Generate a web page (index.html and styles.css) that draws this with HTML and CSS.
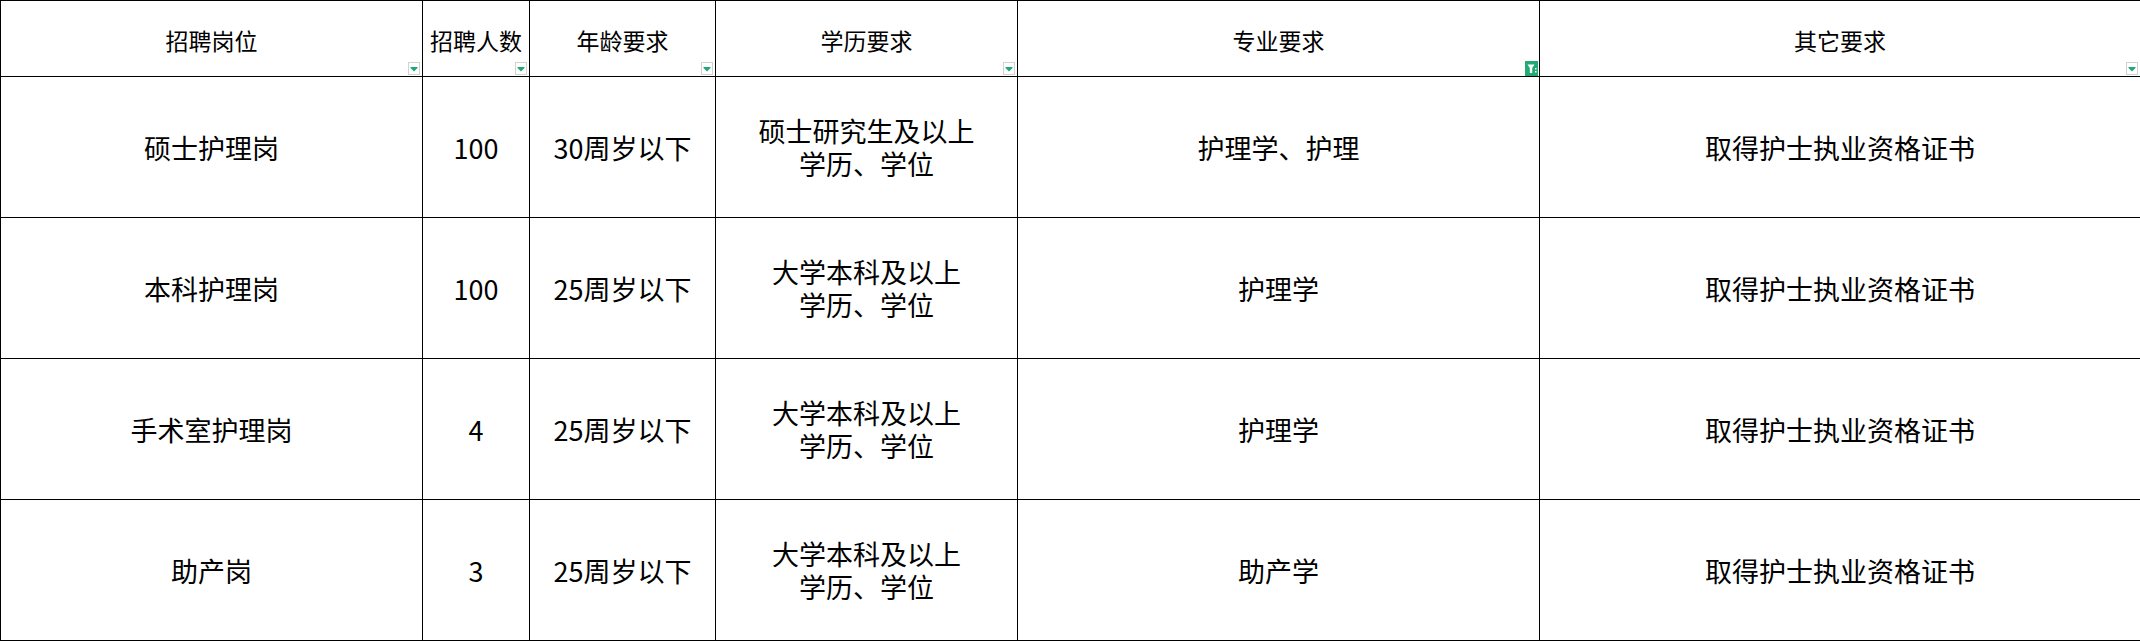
FILE: index.html
```html
<!DOCTYPE html>
<html lang="zh-CN">
<head>
<meta charset="utf-8">
<title>招聘岗位</title>
<link rel="stylesheet" href="styles.css">
</head>
<body>
<table class="sheet">
  <colgroup>
    <col class="c1"><col class="c2"><col class="c3"><col class="c4"><col class="c5"><col class="c6">
  </colgroup>
  <thead>
    <tr class="head">
      <th>招聘岗位<span class="dd"><svg viewBox="0 0 12 13" width="12" height="13"><path d="M2.5 5 H9.5 V6 L6 9.5 L2.5 6 Z" fill="#23a874"/></svg></span></th>
      <th>招聘人数<span class="dd"><svg viewBox="0 0 12 13" width="12" height="13"><path d="M2.5 5 H9.5 V6 L6 9.5 L2.5 6 Z" fill="#23a874"/></svg></span></th>
      <th>年龄要求<span class="dd"><svg viewBox="0 0 12 13" width="12" height="13"><path d="M2.5 5 H9.5 V6 L6 9.5 L2.5 6 Z" fill="#23a874"/></svg></span></th>
      <th>学历要求<span class="dd"><svg viewBox="0 0 12 13" width="12" height="13"><path d="M2.5 5 H9.5 V6 L6 9.5 L2.5 6 Z" fill="#23a874"/></svg></span></th>
      <th>专业要求<span class="ff"><svg viewBox="0 0 13 15" width="13" height="15"><path d="M2.5 3.5 H9.5 L7.2 7 V12 H4.8 V7 Z" fill="#fff"/><rect x="10" y="7" width="1.5" height="1.5" fill="#fff"/><rect x="10" y="10" width="1.5" height="1.5" fill="#fff"/></svg></span></th>
      <th>其它要求<span class="dd"><svg viewBox="0 0 12 13" width="12" height="13"><path d="M2.5 5 H9.5 V6 L6 9.5 L2.5 6 Z" fill="#23a874"/></svg></span></th>
    </tr>
  </thead>
  <tbody>
    <tr>
      <td>硕士护理岗</td><td>100</td><td>30周岁以下</td><td><span class="ln">硕士研究生及以上</span><span class="ln">学历、学位</span></td><td>护理学、护理</td><td>取得护士执业资格证书</td>
    </tr>
    <tr>
      <td>本科护理岗</td><td>100</td><td>25周岁以下</td><td><span class="ln">大学本科及以上</span><span class="ln">学历、学位</span></td><td>护理学</td><td>取得护士执业资格证书</td>
    </tr>
    <tr>
      <td>手术室护理岗</td><td>4</td><td>25周岁以下</td><td><span class="ln">大学本科及以上</span><span class="ln">学历、学位</span></td><td>护理学</td><td>取得护士执业资格证书</td>
    </tr>
    <tr>
      <td>助产岗</td><td>3</td><td>25周岁以下</td><td><span class="ln">大学本科及以上</span><span class="ln">学历、学位</span></td><td>助产学</td><td>取得护士执业资格证书</td>
    </tr>
  </tbody>
</table>
</body>
</html>
```
FILE: styles.css
```css
html, body {
  margin: 0;
  padding: 0;
  background: #fff;
}
.sheet {
  border-collapse: collapse;
  table-layout: fixed;
  width: 2140px;
  font-family: "Noto Sans CJK SC", "Liberation Sans", sans-serif;
  color: #000;
}
.c1 { width: 422px; }
.c2 { width: 107px; }
.c3 { width: 186px; }
.c4 { width: 302px; }
.c5 { width: 522px; }
.c6 { width: 601px; }
.sheet th, .sheet td {
  border: 1px solid #000;
  padding: 0;
  text-align: center;
  vertical-align: middle;
  position: relative;
}
.head th {
  height: 76px;
  font-size: 23px;
  font-weight: normal;
  line-height: 28px;
  padding-top: 2px;
  box-sizing: border-box;
}
.sheet td {
  height: 140px;
  font-size: 27px;
  line-height: 33px;
}
.ln {
  display: block;
  line-height: 33px;
  height: 33px;
}
.dd {
  position: absolute;
  right: 2px;
  bottom: 1px;
  width: 12px;
  height: 13px;
  box-sizing: border-box;
  border: 1px solid #d2d2d2;
  background: #fff;
  display: flex;
  align-items: center;
  justify-content: center;
}
.dd svg { display: block; flex: none; }
.ff {
  position: absolute;
  right: 1px;
  bottom: 0;
  width: 13px;
  height: 15px;
  background: #22aa74;
}
.ff svg { display: block; }
```
